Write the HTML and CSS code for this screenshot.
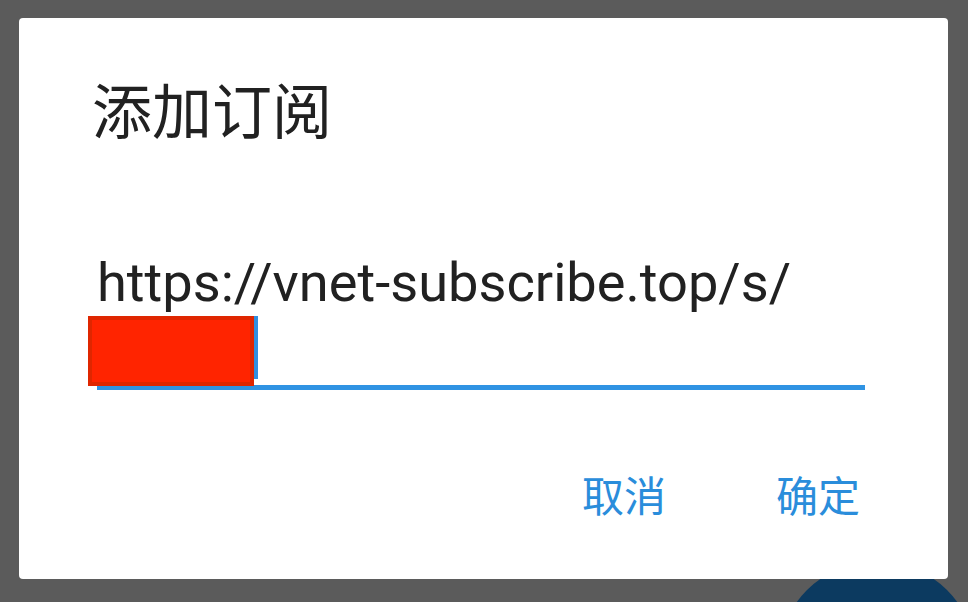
FILE: index.html
```html
<!DOCTYPE html>
<html lang="zh-CN">
<head>
<meta charset="utf-8">
<title>添加订阅</title>
<link rel="stylesheet" href="styles.css">
</head>
<body>
<div class="screen">
  <div class="fab"></div>
  <div class="dialog">
    <h1 class="title">添加订阅</h1>
    <div class="field">
      <div class="field-text">https://vnet-subscribe.top/s/<br><span class="line2"><span class="hidden-part"></span><span class="caret"></span></span></div>
      <div class="redact"></div>
      <div class="underline"></div>
    </div>
    <div class="actions">
      <button class="btn">取消</button>
      <button class="btn btn-ok">确定</button>
    </div>
  </div>
</div>
</body>
</html>
```
FILE: styles.css
```css
html, body {
  margin: 0;
  padding: 0;
  background: #5b5b5b;
  width: 968px;
  height: 602px;
  overflow: hidden;
}
.screen {
  position: relative;
  width: 968px;
  height: 602px;
  padding: 18px 20px 0 19px;
  box-sizing: border-box;
  overflow: hidden;
}
.fab {
  position: absolute;
  left: 778px;
  top: 561px;
  width: 198px;
  height: 198px;
  border-radius: 50%;
  background: #0c3a60;
}
.dialog {
  position: relative;
  width: 929px;
  height: 561px;
  background: #ffffff;
  border-radius: 4px;
  box-sizing: border-box;
  padding: 0 0 0 78px;
  display: flex;
  flex-direction: column;
}
.title {
  margin: 60px 0 0 -5px;
  font-family: "Noto Sans CJK SC", sans-serif;
  font-weight: 400;
  font-size: 60px;
  line-height: 60px;
  color: #212121;
}
.field {
  position: relative;
  margin-top: 113px;
  width: 768px;
}
.field-text {
  font-family: Roboto, "Noto Sans CJK SC", sans-serif;
  font-size: 54.2px;
  line-height: 64px;
  color: #212121;
}
.line2 {
  display: inline-flex;
  align-items: flex-start;
  height: 64px;
  vertical-align: top;
}
.hidden-part {
  display: inline-block;
  width: 157px;
}
.caret {
  display: inline-block;
  width: 4px;
  height: 63px;
  margin-top: 1px;
  background: #2f8fe0;
}
.redact {
  position: absolute;
  left: -9px;
  top: 65px;
  width: 166px;
  height: 70px;
  box-sizing: border-box;
  background: #ff2400;
  border: 4px solid #df2600;
}
.underline {
  margin-top: 6px;
  height: 5px;
  background: #2f93e3;
}
.actions {
  display: flex;
  justify-content: flex-end;
  gap: 110px;
  margin-top: 83px;
  padding-right: 88px;
}
.btn {
  border: 0;
  background: none;
  padding: 0;
  font-family: "Noto Sans CJK SC", sans-serif;
  font-size: 42px;
  line-height: 42px;
  color: #2a8ddb;
}
```
